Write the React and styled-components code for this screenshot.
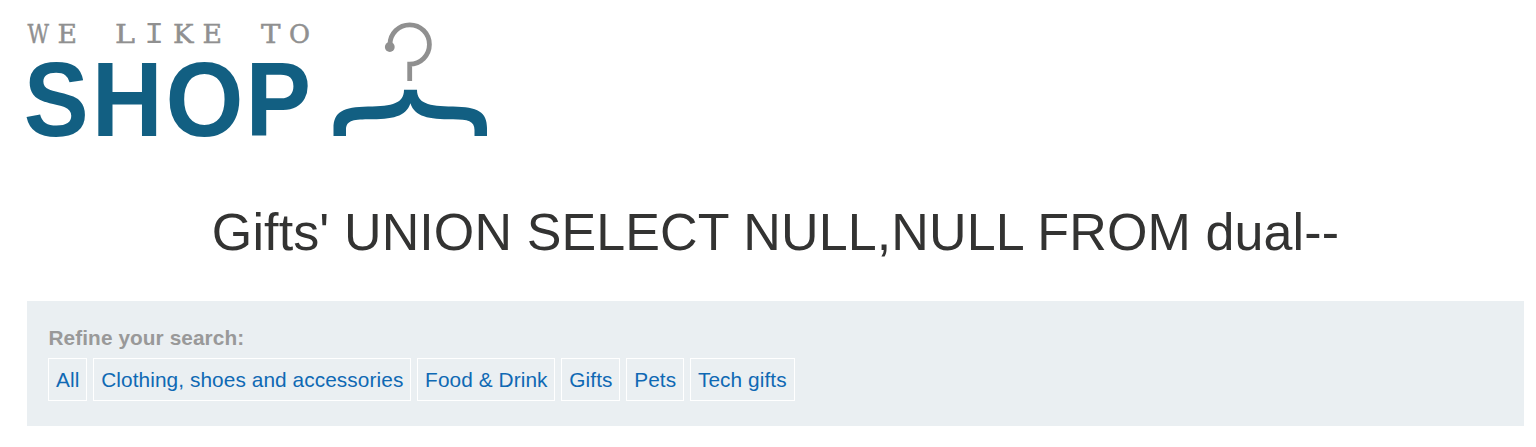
import React from "react";
import styled, { createGlobalStyle } from "styled-components";

const GlobalStyle = createGlobalStyle`
  body {
    margin: 0;
    background: #fff;
    font-family: "Liberation Sans", Arial, sans-serif;
    font-size: 20.8px;
    color: #333332;
  }
`;

const Page = styled.main`
  padding: 0 12px 0 27px;
`;

const Header = styled.header`
  height: 150px;
`;

const LogoSvg = styled.svg`
  display: block;
  width: 470px;
  height: 150px;
  overflow: visible;
`;

const Tagline = styled.text`
  font-family: "DejaVu Serif", serif;
  font-size: 26.5px;
  fill: #909090;
  stroke: #909090;
  stroke-width: 0.5px;
`;

const Wordmark = styled.text`
  font-family: "Liberation Sans", Arial, sans-serif;
  font-weight: 700;
  font-size: 106px;
  fill: #125f82;
`;

const Letter = styled.tspan`
  ${(p) => p.$mono && 'font-family: "Liberation Mono", monospace; font-size: 29.5px; stroke: none;'}
`;

const Title = styled.h1`
  margin: 0;
  padding-top: 52px;
  height: 99px;
  font-size: 52px;
  font-weight: 400;
  line-height: 60px;
  letter-spacing: 0.12px;
  text-align: center;
  white-space: nowrap;
`;

const Filters = styled.section`
  box-sizing: border-box;
  height: 125px;
  padding: 25px 21px 0;
  background: #eaeff2;
`;

const FilterLabel = styled.div`
  height: 32px;
  padding-left: 0.5px;
  line-height: 24px;
  font-weight: 700;
  letter-spacing: 0.08px;
  color: #999;
`;

const FilterList = styled.nav`
  display: flex;
  gap: 5.8px;
`;

const FilterLink = styled.a`
  box-sizing: border-box;
  height: 43px;
  padding: 0 6.9px 0 7.05px;
  border: 1px solid #fff;
  line-height: 41px;
  letter-spacing: 0.09px;
  color: #0f69b4;
  text-decoration: none;
  white-space: nowrap;
`;

// Each letter: character, left edge of its advance box, advance width.
const TAGLINE = [
  ["W", 27.5, 21.5],
  ["E", 57.5, 19.5],
  [" ", 80, 20],
  ["L", 115, 20],
  ["I", 144.3, 19.8, true],
  ["K", 173, 20.5],
  ["E", 202.5, 19.5],
  [" ", 226, 20],
  ["T", 261, 19.5],
  ["O", 289, 21],
];

const WORD = [
  ["S", 23.8, 65],
  ["H", 91.8, 71],
  ["O", 165.5, 78],
  ["P", 245.5, 65.5],
];

const CATEGORIES = ["All", "Clothing, shoes and accessories", "Food & Drink", "Gifts", "Pets", "Tech gifts"];

function Letters({ items }) {
  return items.map(([char, x, width, mono]) => (
    <Letter key={x} x={x} textLength={width} lengthAdjust="spacingAndGlyphs" $mono={mono}>
      {char}
    </Letter>
  ));
}

function Logo() {
  return (
    <LogoSvg viewBox="27 0 470 150">
      <Tagline y="43" xmlSpace="preserve">
        <Letters items={TAGLINE} />
      </Tagline>
      <Wordmark y="136">
        <Letters items={WORD} />
      </Wordmark>
      <circle cx="389.8" cy="47" r="4.9" fill="#909090" />
      <path d="M390 47V44.5A19.7 19.7 0 1 1 409.7 64.2V81" fill="none" stroke="#909090" strokeWidth="4.8" />
      <path
        d="M404 89.7H417C417 103 428 106.4 453 106.4C478 106.8 487 112 487 128V136H474.5V130C474.5 121 468 119.5 453 119.3C428 119 415 117 410.4 103.2C405.8 117 393 119 368 119.3C352 119.5 346 121 346 130V136H333.5V128C333.5 112 343 106.8 368 106.4C393 106.4 404 103 404 89.7Z"
        fill="#125f82"
      />
    </LogoSvg>
  );
}

export default function App() {
  return (
    <>
      <GlobalStyle />
      <Page>
        <Header>
          <Logo />
        </Header>
        <Title>Gifts' UNION SELECT NULL,NULL FROM dual--</Title>
        <Filters>
          <FilterLabel>Refine your search:</FilterLabel>
          <FilterList>
            {CATEGORIES.map((name) => (
              <FilterLink key={name} href="#">
                {name}
              </FilterLink>
            ))}
          </FilterList>
        </Filters>
      </Page>
    </>
  );
}
